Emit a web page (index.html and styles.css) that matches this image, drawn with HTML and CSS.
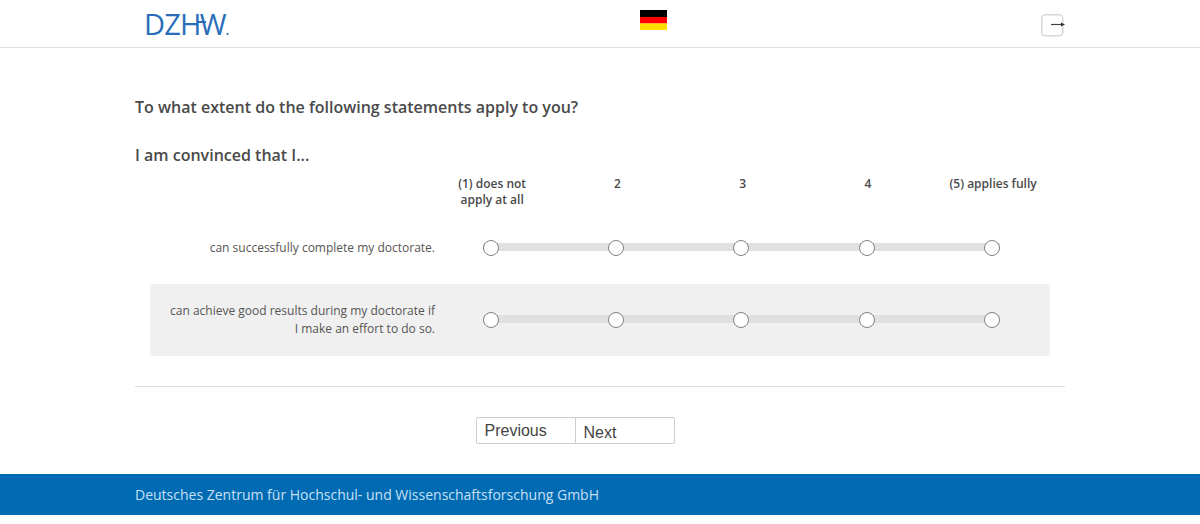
FILE: index.html
```html
<!DOCTYPE html>
<html>

<head>
    <title>DZHW</title>
    <meta charset="utf-8">
    <link rel="stylesheet" href="styles.css">
</head>

<body>
    <div class="top-bar">
        <div class="top-inner">
            <a class="logo">DZH<span class="logo-w">W</span><span class="logo-dot">.</span></a>
            <svg class="flag" width="27" height="20" viewBox="0 0 27 20">
                <rect width="27" height="7" fill="#000"></rect>
                <rect y="7" width="27" height="6.5" fill="#f00"></rect>
                <rect y="13.5" width="27" height="6.5" fill="#ffdf00"></rect>
            </svg>
            <svg class="exit" width="24" height="24" viewBox="0 0 24 24">
                <rect x="0.75" y="0.75" width="21" height="21" rx="3.5" fill="#fff" stroke="#d8d8d8" stroke-width="1.5"></rect>
                <path d="M10 10.5H21" stroke="#444" stroke-width="1.2"></path>
                <path d="M20 8.5L24 10.5L20 12.5Z" fill="#333"></path>
            </svg>
        </div>
    </div>

    <div class="content">
        <h2 class="question">To what extent do the following statements apply to you?</h2>
        <h3 class="intro">I am convinced that I...</h3>

        <div class="scale-head">
            <div class="scale-label">(1) does not apply at all</div>
            <div class="scale-label">2</div>
            <div class="scale-label">3</div>
            <div class="scale-label">4</div>
            <div class="scale-label">(5) applies fully</div>
        </div>

        <div class="item">
            <div class="item-text">can successfully complete my doctorate.</div>
            <div class="scale">
                <input type="radio" name="q1">
                <input type="radio" name="q1">
                <input type="radio" name="q1">
                <input type="radio" name="q1">
                <input type="radio" name="q1">
            </div>
        </div>
        <div class="item item-alt">
            <div class="item-text">can achieve good results during my doctorate if I make an effort to do so.</div>
            <div class="scale">
                <input type="radio" name="q2">
                <input type="radio" name="q2">
                <input type="radio" name="q2">
                <input type="radio" name="q2">
                <input type="radio" name="q2">
            </div>
        </div>

        <hr class="divider">

        <div class="nav-buttons">
            <button class="nav-btn btn-prev">Previous</button>
            <button class="nav-btn btn-next">Next</button>
        </div>
    </div>

    <div class="footer">
        <div class="footer-inner">Deutsches Zentrum für Hochschul- und Wissenschaftsforschung GmbH</div>
    </div>
</body>

</html>
```

FILE: styles.css
```css
body {
    margin: 0;
    font-family: "Open Sans", "Liberation Sans", sans-serif;
    color: #4a4a4a;
    background-color: #fff;
}

.top-bar {
    height: 47px;
    border-bottom: 1px solid #ddd;
}

.top-inner {
    display: flex;
    align-items: flex-start;
    justify-content: space-between;
    width: 930px;
    height: 47px;
    margin: 0 auto;
}

.logo {
    width: 100px;
    margin: 7px 0 0 10px;
    font-family: "Open Sans", sans-serif;
    font-size: 29px;
    font-weight: 400;
    line-height: 34px;
    letter-spacing: -0.8px;
    color: #2a6ebb;
    transform: translateX(-1px);
}

.logo-w {
    position: relative;
    margin-left: -1px;
}

/* the H crossbar runs on into the W */
.logo-w::before {
    content: "";
    position: absolute;
    left: -3px;
    top: 17px;
    width: 9px;
    height: 2px;
    background-color: #2a6ebb;
}

.logo-dot {
    font-size: 14px;
    font-weight: 600;
}

.flag {
    margin: 10px 0 0 21px;
}

.exit {
    margin: 14px 0 0 0;
}

.content {
    width: 930px;
    margin: 0 auto;
}

.question {
    margin: 0;
    padding-top: 47px;
    font-size: 16px;
    line-height: 24px;
    font-weight: 600;
}

.intro {
    margin: 0;
    padding-top: 24px;
    font-size: 16px;
    line-height: 24px;
    font-weight: 600;
}

.scale-head {
    display: grid;
    grid-template-columns: repeat(5, 125.25px);
    height: 36px;
    padding: 9px 0 0 294.5px;
}

.scale-label {
    width: 100px;
    margin: 0 auto;
    font-size: 12px;
    line-height: 16px;
    font-weight: 600;
    text-align: center;
}

.item {
    display: flex;
    align-items: center;
    height: 72px;
    margin: 0 15px;
    border-radius: 3px;
}

.item-alt {
    background-color: #f0f0f0;
}

.item-text {
    width: 270px;
    margin-left: 15px;
    font-size: 12px;
    line-height: 18px;
    text-align: right;
    color: #555;
}

.scale {
    display: flex;
    justify-content: space-between;
    width: 516.9px;
    margin-left: 48px;
    background: linear-gradient(#e0e0e0, #e0e0e0) no-repeat 0 3px / 100% 8px;
}

.scale input {
    appearance: none;
    width: 16px;
    height: 16px;
    margin: 0;
    border: 1px solid #808080;
    border-radius: 50%;
    background-color: #fff;
}

.divider {
    height: 1px;
    margin: 30px 0 0 0;
    border: 0;
    background-color: #ddd;
}

.nav-buttons {
    display: flex;
    justify-content: center;
    padding: 30px 50px 30px 0;
}

.nav-btn {
    width: 100px;
    height: 27px;
    padding: 1px 8px 0 8px;
    border: 1px solid #ccc;
    background-color: #fff;
    font-family: "Liberation Sans", sans-serif;
    font-size: 16px;
    color: #444;
    text-align: left;
}

.btn-prev {
    padding-bottom: 1px;
    border-radius: 2px 0 0 2px;
}

.btn-next {
    margin-left: -1px;
    padding-top: 5px;
    border-radius: 0 2px 2px 0;
}

.footer {
    height: 41px;
    background-color: #006ab3;
}

.footer-inner {
    width: 930px;
    margin: 0 auto;
    font-size: 14px;
    line-height: 41px;
    color: #c6e0f5;
}
```
